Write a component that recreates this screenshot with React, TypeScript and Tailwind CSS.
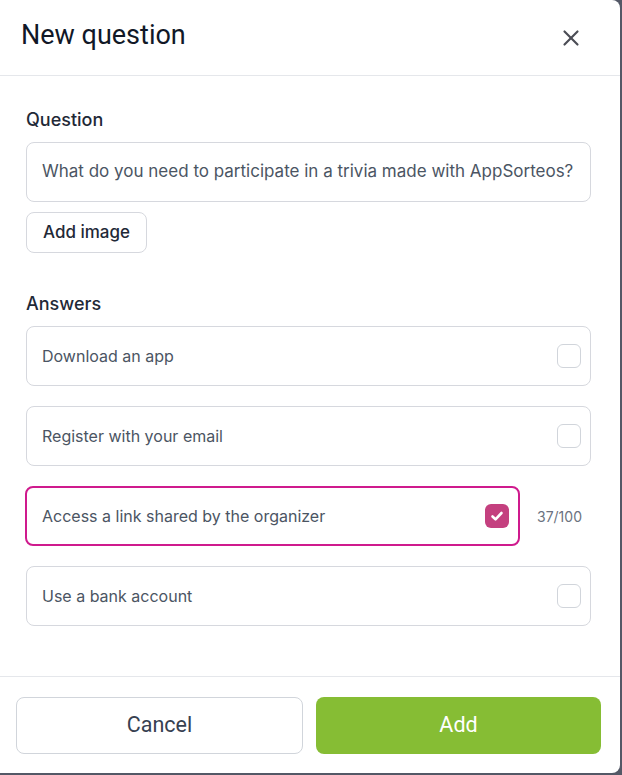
import { X } from 'lucide-react'

const ANSWERS = [
  { text: 'Download an app', checked: false },
  { text: 'Register with your email', checked: false },
  { text: 'Access a link shared by the organizer', checked: true, count: '37/100' },
  { text: 'Use a bank account', checked: false },
]

function Checkbox({ checked }: { checked: boolean }) {
  if (checked) {
    return (
      <span className="flex h-6 w-6 items-center justify-center rounded-md bg-[#c4407f]">
        <svg viewBox="0 0 16 16" className="h-4 w-4" fill="none" stroke="white" strokeWidth={2.6} strokeLinecap="round" strokeLinejoin="round">
          <path d="M3.5 8.5l3 2.8 6-6.3" />
        </svg>
      </span>
    )
  }
  return <span className="h-6 w-6 rounded-md border border-[#d1d5db] bg-white" />
}

export default function App() {
  return (
    <div className="h-[775px] w-[622px] bg-[#535866] font-['Inter',sans-serif]">
      <div className="flex h-[773px] w-[620px] flex-col rounded-tr-lg rounded-br-lg bg-white">
        <header className="flex h-[76px] shrink-0 items-center justify-between border-b border-[#e5e7eb] pl-[21px] pr-[36px]">
          <h1 className="pb-1 font-['Roboto',sans-serif] text-[27px] font-normal text-[#111827]">New question</h1>
          <X className="h-[26px] w-[26px] text-[#4b4d55]" strokeWidth={2} />
        </header>

        <div className="flex-1 pl-[26px] pr-[29px] pt-[31px]">
          <h2 className="text-[18px] font-medium leading-[26px] text-[#1f2937]">Question</h2>
          <div className="mt-[9px] flex h-[60px] items-center rounded-lg border border-[#d6d8de] px-[15px] text-[17px] text-[#4b5563]">
            What do you need to participate in a trivia made with AppSorteos?
          </div>
          <button className="mt-[10px] h-[41px] w-[121px] rounded-lg border border-[#d6d8de] text-[17px] font-medium text-[#1f2937]">
            Add image
          </button>

          <h2 className="mt-[38px] text-[18px] font-medium leading-[26px] text-[#1f2937]">Answers</h2>
          <div className="mt-[9px] flex flex-col gap-5">
            {ANSWERS.map((a) =>
              a.checked ? (
                <div key={a.text} className="-ml-px flex items-center">
                  <div className="flex h-[60px] w-[495px] items-center justify-between rounded-lg border-2 border-[#cf1a8d] pl-[15px] pr-[9px] text-[16px] text-[#4b5563]">
                    {a.text}
                    <Checkbox checked />
                  </div>
                  <span className="ml-[17px] text-[14px] text-[#6b7280]">{a.count}</span>
                </div>
              ) : (
                <div
                  key={a.text}
                  className="flex h-[60px] items-center justify-between rounded-lg border border-[#d6d8de] pl-[15px] pr-[9px] text-[16px] text-[#4b5563]"
                >
                  {a.text}
                  <Checkbox checked={false} />
                </div>
              ),
            )}
          </div>
        </div>

        <footer className="flex h-[97px] shrink-0 gap-[13px] border-t border-[#e5e7eb] pl-[16px] pr-[19px] pt-[20px] font-['Roboto',sans-serif]">
          <button className="h-[57px] flex-1 rounded-lg border border-[#d1d5db] text-[21.5px] font-normal text-[#374151]">
            Cancel
          </button>
          <button className="h-[57px] flex-1 rounded-lg bg-[#86bd34] text-[21.5px] font-normal text-white">Add</button>
        </footer>
      </div>
    </div>
  )
}
